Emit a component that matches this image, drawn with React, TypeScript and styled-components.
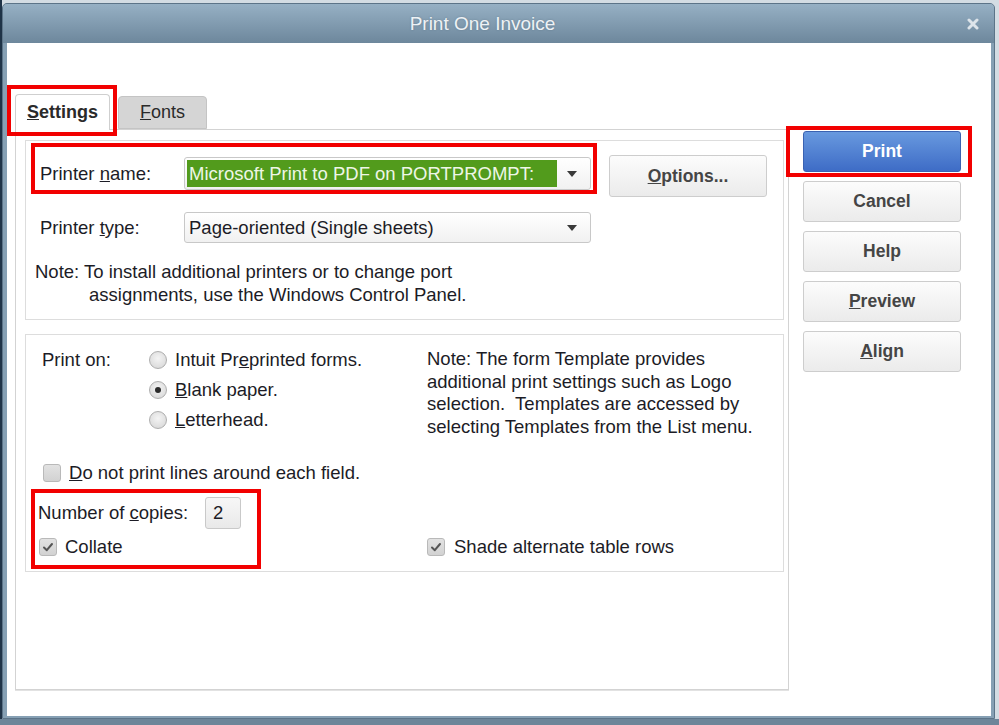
import React from "react";
import styled, { createGlobalStyle } from "styled-components";

const GlobalStyle = createGlobalStyle`
  html, body {
    margin: 0;
    padding: 0;
  }
  body {
    width: 999px;
    height: 725px;
    overflow: hidden;
    font-family: "Liberation Sans", Arial, sans-serif;
    background:
      linear-gradient(to bottom, transparent 719px, #6d8599 719px),
      linear-gradient(to right, #1f3347 0 2px, #d3dce3 2px);
  }
`;

const Page = styled.div`
  position: relative;
  width: 999px;
  height: 725px;
  padding: 3px 0 0 2px;
  box-sizing: border-box;
`;

const Window = styled.div`
  width: 993px;
  height: 716px;
  box-sizing: border-box;
  display: flex;
  flex-direction: column;
  border: 1px solid #5c7488;
  border-radius: 5px 5px 0 0;
  background: #86a0b4;
  overflow: hidden;
`;

const TitleBar = styled.div`
  height: 39px;
  flex-shrink: 0;
  display: flex;
  align-items: center;
  background: linear-gradient(#96b0c4, #6d879c);
`;

const Title = styled.div`
  flex: 1;
  text-align: center;
  color: #eef2f5;
  font-size: 19px;
  text-shadow: 0 0 2px rgba(60, 80, 100, 0.4);
`;

const CloseBtn = styled.div`
  width: 22px;
  height: 22px;
  margin-right: 10px;
  display: flex;
  align-items: center;
  justify-content: center;
`;

const Body = styled.div`
  flex: 1;
  margin: 0 3px 2px 4px;
  background: #ffffff;
  display: flex;
  align-items: flex-start;
  gap: 14px;
  padding: 51px 0 0 8px;
  color: #1c1c26;
  font-size: 18.5px;
`;

const LeftCol = styled.div`
  width: 774px;
  display: flex;
  flex-direction: column;
`;

const TabBar = styled.div`
  height: 36px;
  display: flex;
  align-items: flex-end;
  gap: 8px;
  margin-bottom: -1px;
  position: relative;
  z-index: 1;
`;

const Tab = styled.div<{ $active?: boolean }>`
  box-sizing: border-box;
  width: ${(p) => (p.$active ? "95px" : "89px")};
  height: ${(p) => (p.$active ? "36px" : "33px")};
  margin-bottom: ${(p) => (p.$active ? "0" : "1px")};
  border: 1px solid ${(p) => (p.$active ? "#cfcfcf" : "#c4c4c4")};
  border-bottom: ${(p) => (p.$active ? "none" : "1px solid #c4c4c4")};
  border-radius: 4px 4px 0 0;
  background: ${(p) => (p.$active ? "#ffffff" : "#d5d5d5")};
  display: flex;
  align-items: center;
  justify-content: center;
  font-weight: ${(p) => (p.$active ? 700 : 400)};
  font-size: 18px;
  color: #2a2a2a;
`;

const TabPanel = styled.div`
  box-sizing: border-box;
  height: 561px;
  border: 1px solid #d3d3d3;
  box-shadow: 0 1px 0 #e2e2e2;
  padding: 10px 4px 0 9px;
`;

const Group = styled.div<{ $h: number }>`
  box-sizing: border-box;
  width: 759px;
  height: ${(p) => p.$h}px;
  border: 1px solid #dddddd;
`;

const PrinterGroup = styled(Group)`
  padding: 14px 0 0 14px;
`;

const FieldRow = styled.div<{ $top?: number }>`
  display: flex;
  align-items: flex-start;
  margin-top: ${(p) => p.$top || 0}px;
`;

const FieldLabel = styled.div<{ $lh: number; $mt?: number }>`
  width: 144px;
  line-height: ${(p) => p.$lh}px;
  margin-top: ${(p) => p.$mt || 0}px;
  white-space: nowrap;
`;

const Combo = styled.div<{ $h: number; $mt?: number }>`
  box-sizing: border-box;
  width: 407px;
  height: ${(p) => p.$h}px;
  margin-top: ${(p) => p.$mt || 0}px;
  border: 1px solid #c8c8c8;
  border-radius: 3px;
  background: linear-gradient(#ffffff, #f1f1f1);
  display: flex;
  align-items: center;
  padding: 2px;
`;

const ComboText = styled.div<{ $selected?: boolean }>`
  height: 100%;
  display: flex;
  align-items: center;
  padding-left: 2px;
  width: ${(p) => (p.$selected ? "370px" : "auto")};
  box-sizing: border-box;
  background: ${(p) => (p.$selected ? "#529b1c" : "transparent")};
  color: ${(p) => (p.$selected ? "#eef6e6" : "#1c1c26")};
  white-space: nowrap;
  overflow: hidden;
`;

const Arrow = styled.div`
  margin-left: auto;
  margin-right: 11px;
  width: 0;
  height: 0;
  border-left: 5px solid transparent;
  border-right: 5px solid transparent;
  border-top: 6px solid #3a3a3a;
`;

const Button = styled.div<{ $primary?: boolean }>`
  box-sizing: border-box;
  width: 158px;
  height: 41px;
  border: 1px solid ${(p) => (p.$primary ? "#3a62b2" : "#cdcdcd")};
  border-radius: 3px;
  background: ${(p) =>
    p.$primary
      ? "linear-gradient(#6899df, #3e6cc6)"
      : "linear-gradient(#fcfcfc, #ebebeb)"};
  color: ${(p) => (p.$primary ? "#ffffff" : "#454545")};
  font-weight: 700;
  font-size: 17.5px;
  display: flex;
  align-items: center;
  justify-content: center;
`;

const OptionsButton = styled(Button)`
  height: 42px;
  margin-left: 18px;
`;

const NoteLine = styled.div<{ $indent?: number }>`
  line-height: 23px;
  padding-left: ${(p) => p.$indent || 0}px;
  white-space: nowrap;
`;

const PrinterNote = styled.div`
  margin: 17px 0 0 -5px;
`;

const PrintGroup = styled(Group)`
  margin-top: 14px;
  padding: 10px 0 0 12px;
  display: grid;
  grid-template-columns: 389px 1fr;
  align-content: start;
`;

const PrintOn = styled.div`
  display: flex;
`;

const PrintOnLabel = styled.div`
  width: 107px;
  margin-left: 4px;
  line-height: 30px;
`;

const RadioList = styled.div`
  display: flex;
  flex-direction: column;
`;

const OptionRow = styled.div<{ $h?: number; $gap?: number }>`
  display: flex;
  align-items: center;
  height: ${(p) => p.$h || 30}px;
  gap: ${(p) => p.$gap || 8}px;
  white-space: nowrap;
`;

const Radio = styled.div<{ $checked?: boolean }>`
  box-sizing: border-box;
  width: 18px;
  height: 18px;
  border-radius: 50%;
  border: 1px solid #aeaeae;
  background: radial-gradient(circle at 50% 40%, #f4f4f4, #d4d4d4);
  display: flex;
  align-items: center;
  justify-content: center;

  &::after {
    content: "";
    display: ${(p) => (p.$checked ? "block" : "none")};
    width: 6px;
    height: 6px;
    border-radius: 50%;
    background: #2b2b2b;
  }
`;

const TemplateNote = styled.div`
  margin-top: 3px;
  line-height: 22.5px;
  white-space: nowrap;
`;

const FullRow = styled.div<{ $top: number; $left?: number }>`
  grid-column: 1 / -1;
  margin-top: ${(p) => p.$top}px;
  margin-left: ${(p) => p.$left || 0}px;
`;

const CellRow = styled.div<{ $top: number; $left?: number }>`
  margin-top: ${(p) => p.$top}px;
  margin-left: ${(p) => p.$left || 0}px;
`;

const Box = styled.div`
  box-sizing: border-box;
  width: 18px;
  height: 18px;
  border: 1px solid #b9b9b9;
  border-radius: 3px;
  background: linear-gradient(#e2e2e2, #d2d2d2);
  display: flex;
  align-items: center;
  justify-content: center;
`;

const CopiesRow = styled.div`
  display: flex;
  align-items: center;
`;

const CopiesLabel = styled.div`
  width: 167px;
  white-space: nowrap;
`;

const CopiesInput = styled.div`
  box-sizing: border-box;
  width: 36px;
  height: 32px;
  border: 1px solid #c9c9c9;
  border-radius: 3px;
  background: linear-gradient(#f7f7f7, #e9e9e9);
  padding-left: 7px;
  display: flex;
  align-items: center;
`;

const ButtonCol = styled.div`
  width: 158px;
  margin-top: 37px;
  display: flex;
  flex-direction: column;
  gap: 9px;
`;

const Annotation = styled.div<{ $x: number; $y: number; $w: number; $h: number }>`
  position: absolute;
  left: ${(p) => p.$x}px;
  top: ${(p) => p.$y}px;
  width: ${(p) => p.$w}px;
  height: ${(p) => p.$h}px;
  box-sizing: border-box;
  border: 4px solid #f20000;
  pointer-events: none;
`;

const Check = () => (
  <svg width="12" height="12" viewBox="0 0 12 12">
    <polyline
      points="2,6.5 4.8,9.2 10,3"
      fill="none"
      stroke="#555"
      strokeWidth="2"
      strokeLinecap="round"
      strokeLinejoin="round"
    />
  </svg>
);

export default function App() {
  return (
    <Page>
      <GlobalStyle />
      <Window>
        <TitleBar>
          <Title>Print One Invoice</Title>
          <CloseBtn>
            <svg width="12" height="12" viewBox="0 0 12 12">
              <path
                d="M2 2 L10 10 M10 2 L2 10"
                stroke="#dde4ea"
                strokeWidth="3"
                strokeLinecap="round"
              />
            </svg>
          </CloseBtn>
        </TitleBar>
        <Body>
          <LeftCol>
            <TabBar>
              <Tab $active>
                <u>S</u>ettings
              </Tab>
              <Tab>
                <u>F</u>onts
              </Tab>
            </TabBar>
            <TabPanel>
              <PrinterGroup $h={180}>
                <FieldRow>
                  <FieldLabel $lh={33} $mt={2}>
                    Printer <u>n</u>ame:
                  </FieldLabel>
                  <Combo $h={33} $mt={2}>
                    <ComboText $selected>Microsoft Print to PDF on PORTPROMPT:</ComboText>
                    <Arrow />
                  </Combo>
                  <OptionsButton>
                    <span>
                      <u>O</u>ptions...
                    </span>
                  </OptionsButton>
                </FieldRow>
                <FieldRow $top={15}>
                  <FieldLabel $lh={31}>
                    Printer <u>t</u>ype:
                  </FieldLabel>
                  <Combo $h={31}>
                    <ComboText>Page-oriented (Single sheets)</ComboText>
                    <Arrow />
                  </Combo>
                </FieldRow>
                <PrinterNote>
                  <NoteLine>Note: To install additional printers or to change port</NoteLine>
                  <NoteLine $indent={54}>assignments, use the Windows Control Panel.</NoteLine>
                </PrinterNote>
              </PrinterGroup>

              <PrintGroup $h={238}>
                <PrintOn>
                  <PrintOnLabel>Print on:</PrintOnLabel>
                  <RadioList>
                    <OptionRow>
                      <Radio />
                      <span>
                        Intuit Pr<u>e</u>printed forms.
                      </span>
                    </OptionRow>
                    <OptionRow>
                      <Radio $checked />
                      <span>
                        <u>B</u>lank paper.
                      </span>
                    </OptionRow>
                    <OptionRow>
                      <Radio />
                      <span>
                        <u>L</u>etterhead.
                      </span>
                    </OptionRow>
                  </RadioList>
                </PrintOn>
                <TemplateNote>
                  Note: The form Template provides
                  <br />
                  additional print settings such as Logo
                  <br />
                  selection.&nbsp; Templates are accessed by
                  <br />
                  selecting Templates from the List menu.
                </TemplateNote>

                <FullRow $top={20} $left={5}>
                  <OptionRow>
                    <Box />
                    <span>
                      <u>D</u>o not print lines around each field.
                    </span>
                  </OptionRow>
                </FullRow>

                <FullRow $top={9}>
                  <CopiesRow>
                    <CopiesLabel>
                      Number of <u>c</u>opies:
                    </CopiesLabel>
                    <CopiesInput>2</CopiesInput>
                  </CopiesRow>
                </FullRow>

                <CellRow $top={8} $left={1}>
                  <OptionRow $h={20}>
                    <Box>
                      <Check />
                    </Box>
                    <span>Collate</span>
                  </OptionRow>
                </CellRow>
                <CellRow $top={8}>
                  <OptionRow $h={20} $gap={9}>
                    <Box>
                      <Check />
                    </Box>
                    <span>Shade alternate table rows</span>
                  </OptionRow>
                </CellRow>
              </PrintGroup>
            </TabPanel>
          </LeftCol>

          <ButtonCol>
            <Button $primary>Print</Button>
            <Button>Cancel</Button>
            <Button>Help</Button>
            <Button>
              <span>
                <u>P</u>review
              </span>
            </Button>
            <Button>
              <span>
                <u>A</u>lign
              </span>
            </Button>
          </ButtonCol>
        </Body>
      </Window>

      <Annotation $x={7} $y={85} $w={110} $h={51} />
      <Annotation $x={31} $y={143} $w={566} $h={51} />
      <Annotation $x={786} $y={126} $w={186} $h={51} />
      <Annotation $x={31} $y={489} $w={230} $h={80} />
    </Page>
  );
}
